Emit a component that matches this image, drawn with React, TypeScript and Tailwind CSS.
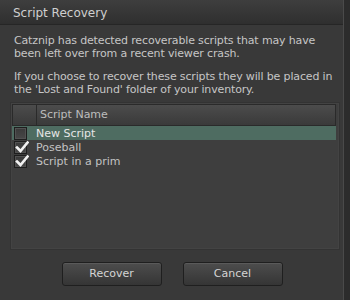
import { useState } from "react";

type ScriptRow = { name: string; checked: boolean };

const initialRows: ScriptRow[] = [
  { name: "New Script", checked: false },
  { name: "Poseball", checked: true },
  { name: "Script in a prim", checked: true },
];

function CheckBox({ checked, onToggle }: { checked: boolean; onToggle: () => void }) {
  return (
    <button
      type="button"
      onClick={onToggle}
      className="relative w-[13px] h-[13px] border border-[#1e1e1e] bg-gradient-to-b from-[#393939] to-[#484848] shadow-[inset_0_0_0_1px_#525252]"
    >
      {checked ? (
        <svg viewBox="0 0 14 14" className="absolute left-[0px] top-[-2px] w-[14px] h-[14px]">
          <path d="M2 7.5 L5.5 11 L12.5 2.5" fill="none" stroke="#f2f2f2" strokeWidth="2.6" strokeLinecap="square" />
        </svg>
      ) : null}
    </button>
  );
}

export default function App() {
  const [rows, setRows] = useState(initialRows);
  const [selected, setSelected] = useState(0);

  const toggle = (i: number) =>
    setRows(rows.map((r, idx) => (idx === i ? { ...r, checked: !r.checked } : r)));

  return (
    <div
      className="w-[350px] h-[300px] bg-[#2c2c2c] flex overflow-hidden text-[11px] text-[#c6c6c6]"
      style={{ fontFamily: '"DejaVu Sans", sans-serif' }}
    >
      <div className="w-[344px] h-full flex flex-col bg-[#393939] border-r border-[#4a4a4a]">
        {/* title bar */}
        <div className="h-[25px] shrink-0 bg-gradient-to-b from-[#3e3e3e] to-[#2f2f2f] border-b border-[#262626] pl-[13px] flex items-center">
          <span className="text-[12px] text-[#cfcfcf] leading-none mt-[2px]">Script Recovery</span>
        </div>

        {/* message */}
        <div className="pl-[14px] pt-[9px] leading-[13px] whitespace-nowrap tracking-[-0.15px]">
          <p>Catznip has detected recoverable scripts that may have</p>
          <p>been left over from a recent viewer crash.</p>
          <p className="mt-[10px]">If you choose to recover these scripts they will be placed in</p>
          <p>the 'Lost and Found' folder of your inventory.</p>
        </div>

        {/* list */}
        <div className="ml-[10px] w-[330px] mt-[6px] h-[148px] bg-[#3e3e3e] border border-[#333] shadow-[inset_0_0_0_1px_#434343] pt-[1px] pl-[1px] pr-[3px]">
          <div className="flex h-[22px]">
            <div className="w-[25px] bg-gradient-to-b from-[#4c4c4c] to-[#3a3a3a] border border-[#2a2a2a]" />
            <div className="flex-1 bg-gradient-to-b from-[#4c4c4c] to-[#3a3a3a] border border-[#2a2a2a] border-l-0 pl-[3px] flex items-center text-[#bdbdbd]">
              Script Name
            </div>
          </div>
          {rows.map((row, i) => (
            <div
              key={row.name}
              onClick={() => setSelected(i)}
              className={
                "flex items-center h-[14px] " +
                (selected === i ? "bg-[#4e6c61] text-[#e6e6e6]" : "text-[#c2c2c2]")
              }
            >
              <div className="w-[24px] pl-[2px] pt-[1px] flex">
                <CheckBox checked={row.checked} onToggle={() => toggle(i)} />
              </div>
              <span className="leading-none">{row.name}</span>
            </div>
          ))}
        </div>

        {/* buttons */}
        <div className="flex justify-center gap-[21px] mt-[12px] pl-[1px]">
          <button className="w-[100px] h-[24px] rounded-[3px] border border-[#1f1f1f] bg-gradient-to-b from-[#4d4d4d] to-[#353535] shadow-[inset_0_1px_0_#5a5a5a] text-[#d4d4d4]">
            Recover
          </button>
          <button className="w-[100px] h-[24px] rounded-[3px] border border-[#1f1f1f] bg-gradient-to-b from-[#4d4d4d] to-[#353535] shadow-[inset_0_1px_0_#5a5a5a] text-[#d4d4d4]">
            Cancel
          </button>
        </div>
      </div>
    </div>
  );
}
